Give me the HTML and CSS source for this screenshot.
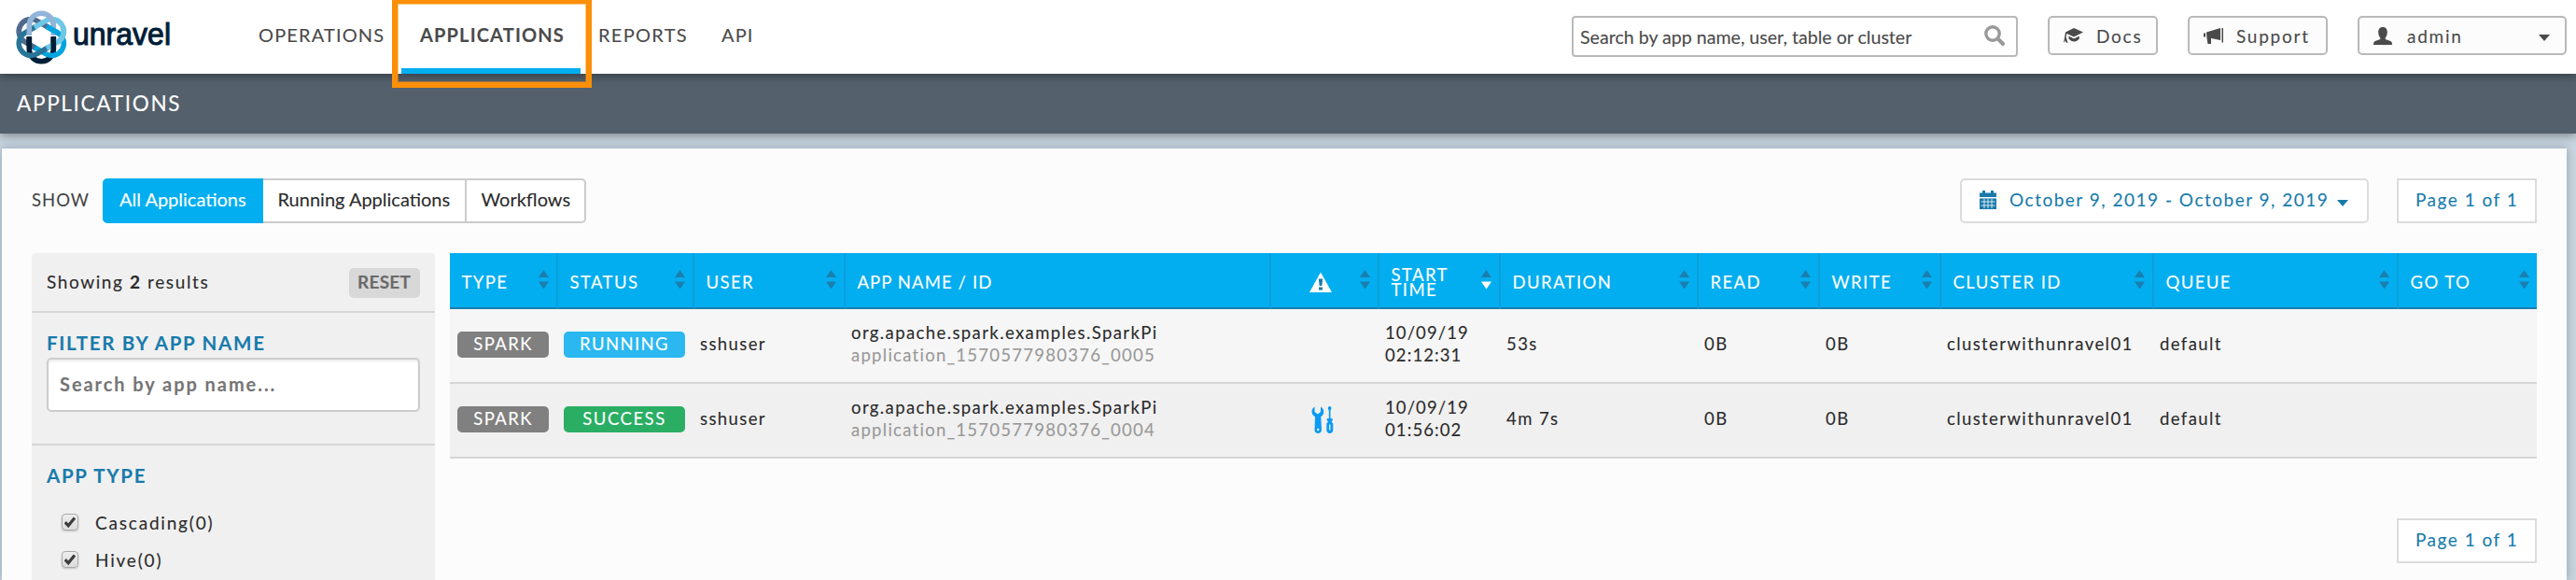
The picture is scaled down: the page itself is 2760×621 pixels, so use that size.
FILE: index.html
```
<!DOCTYPE html>
<html lang="en">
<head>
<meta charset="utf-8">
<title>Unravel - Applications</title>
<link rel="stylesheet" href="styles.css">
</head>
<body>
<svg class="defs" width="0" height="0">
  <symbol id="sort" viewBox="0 0 11 21"><path class="up" d="M5.500 0L11 8H0z"/><path class="down" d="M0 12.500h11l-5.500 8z"/></symbol>
  <symbol id="caret" viewBox="0 0 12 7"><path d="M0 0h12L6 7z"/></symbol>
</svg>
<header class="topbar">
  <a class="logo">
    <svg width="180" height="67" viewBox="0 0 180 67">
      <g transform="translate(36.3 40)" fill="none" stroke-width="5.6">
        <path stroke="#4f6a8c" transform="rotate(-60)" d="M-13 1V-12.8A13 13 0 0 1 13-12.8V1"/>
        <path stroke="#001e37" transform="rotate(180)" d="M-13 1V-12.8A13 13 0 0 1 13-12.8V1"/>
        <path stroke="#00a4de" transform="rotate(120)" d="M-13 1V-12.8A13 13 0 0 1 13-12.8V1"/>
        <path stroke="#297599" transform="rotate(-120)" d="M-13 1V-12.8A13 13 0 0 1 13-12.8V1"/>
        <path stroke="#6ec8e6" transform="rotate(60)" d="M-13 1V-12.8A13 13 0 0 1 13-12.8V1"/>
        <path stroke="#92b4d8" d="M-13 -2V-12.8A13 13 0 0 1 13-12.8V-2"/>
        <path stroke="#001e37" d="M-13 0V9M13 0V13"/>
        <path stroke="#6ec8e6" transform="rotate(60)" d="M13 -11.8A13 13 0 0 0 2 -25.4"/>
        <path stroke="#00a4de" transform="rotate(120)" d="M-13 -2V-14"/>
      </g>
      <text class="wordmark" x="70" y="48.4" textLength="105" lengthAdjust="spacingAndGlyphs">unravel</text>
    </svg>
  </a>
  <nav class="nav">
    <a class="nav-ops">OPERATIONS</a>
    <a class="nav-apps">APPLICATIONS<span class="callout"></span></a>
    <a class="nav-reports">REPORTS</a>
    <a class="nav-api">API</a>
  </nav>
  <div class="search"><span>Search by app name, user, table or cluster</span>
    <svg width="23" height="23" viewBox="0 0 23 23" fill="none" stroke="#999"><circle cx="9" cy="9" r="7.2" stroke-width="3.4"/><path d="M14.5 14.5l5.5 5.5" stroke-width="4" stroke-linecap="round"/></svg>
  </div>
  <a class="btn docs">
    <svg width="21" height="17" viewBox="0 0 21 17"><path d="M11 0l10 4.6-10 5L3.4 6 2.6 9.5l2 6.5-2-.6-.8-2L0 16l1.2-6.500L2 4.600z"/><path d="M5.500 8.600l5.500 2.700 5.800-2.700v3c-3 3.800-8 3.800-11.300 0z"/><path d="M5 7.600l6 3.200 6.500-3.200" fill="none" stroke="#fcfcfc" stroke-width="1"/></svg>
    <span>Docs</span></a>
  <a class="btn support">
    <svg width="21" height="17" viewBox="0 0 21 17"><path d="M3 4.500L18 0v13L8 11v6H4.500L3.500 11zM19.500 0H21v15.500h-1.500zM0 5.500h2v4H0z"/></svg>
    <span>Support</span></a>
  <a class="btn admin">
    <svg width="20" height="19" viewBox="0 0 20 19"><path d="M10 0c3.200 0 4.800 2.200 4.800 5.400 0 2.600-1 4.700-2.100 6v1.500l5.500 2c1.200.5 1.800 1.600 1.800 4.100H0c0-2.500.6-3.600 1.800-4.100l5.500-2v-1.500c-1.100-1.300-2.100-3.400-2.100-6C5.200 2.200 6.800 0 10 0z"/></svg>
    <span>admin</span>
    <svg class="caret" width="12" height="7"><use href="#caret"/></svg></a>
</header>
<div class="titlebar">APPLICATIONS</div>
<main class="card">
  <div class="toolbar">
    <span class="show">SHOW</span>
    <div class="tabs"><a class="tab active">All Applications</a><a class="tab running">Running Applications</a><a class="tab flows">Workflows</a></div>
    <a class="date">
      <svg width="18" height="20" viewBox="0 0 18 20"><path d="M0 2.500h3V0h3v2.500h6V0h3v2.500h3V7H0zM0 8.500h18V20H0z"/><path d="M1.500 12h15M1.500 16h15M5 9v10M9 9v10M13 9v10" stroke="#fff" stroke-width=".8"/></svg>
      <span>October 9, 2019 - October 9, 2019</span>
      <svg class="caret" width="12" height="7"><use href="#caret"/></svg>
    </a>
    <span class="page">Page 1 of 1</span>
  </div>
  <div class="content">
    <aside class="sidebar">
      <div class="results"><span>Showing <b>2</b> results</span><a class="reset">RESET</a></div>
      <section class="filter">
        <h3>FILTER BY APP NAME</h3>
        <div class="filter-input">Search by app name...</div>
      </section>
      <section class="types">
        <h3>APP TYPE</h3>
        <label><i class="check"><svg width="12" height="12" viewBox="0 0 12 12"><path d="M.8 6.200L4.200 9.800 11 1.500"/></svg></i>Cascading(0)</label>
        <label><i class="check"><svg width="12" height="12" viewBox="0 0 12 12"><path d="M.8 6.200L4.200 9.800 11 1.500"/></svg></i>Hive(0)</label>
      </section>
    </aside>
    <div class="listing">
      <div class="row head">
        <div>TYPE<svg class="sort"><use href="#sort"/></svg></div>
        <div>STATUS<svg class="sort"><use href="#sort"/></svg></div>
        <div>USER<svg class="sort"><use href="#sort"/></svg></div>
        <div class="tight">APP NAME / ID</div>
        <div><svg class="warn" width="24" height="22" viewBox="0 0 24 22"><path d="M12 0.500L24 22H0z" fill="#fff"/><path d="M9.800 7.500h4.400l-.9 7.500h-2.600zM10 16.500h4v3h-4z" fill="#1a7aab"/></svg><svg class="sort"><use href="#sort"/></svg></div>
        <div><span>START<br>TIME</span><svg class="sort desc"><use href="#sort"/></svg></div>
        <div>DURATION<svg class="sort"><use href="#sort"/></svg></div>
        <div>READ<svg class="sort"><use href="#sort"/></svg></div>
        <div>WRITE<svg class="sort"><use href="#sort"/></svg></div>
        <div>CLUSTER ID<svg class="sort"><use href="#sort"/></svg></div>
        <div>QUEUE<svg class="sort"><use href="#sort"/></svg></div>
        <div>GO TO<svg class="sort"><use href="#sort"/></svg></div>
      </div>
      <div class="row">
        <div><span class="badge spark">SPARK</span></div>
        <div><span class="badge run">RUNNING</span></div>
        <div>sshuser</div>
        <div><span>org.apache.spark.examples.SparkPi<br><span class="appid">application_1570577980376_0005</span></span></div>
        <div></div>
        <div class="time"><span>10/09/19<br>02:12:31</span></div>
        <div>53s</div><div>0B</div><div>0B</div><div>clusterwithunravel01</div><div>default</div><div></div>
      </div>
      <div class="row alt">
        <div><span class="badge spark">SPARK</span></div>
        <div><span class="badge ok">SUCCESS</span></div>
        <div>sshuser</div>
        <div><span>org.apache.spark.examples.SparkPi<br><span class="appid">application_1570577980376_0004</span></span></div>
        <div><svg class="tools" width="24" height="29" viewBox="0 0 24 29"><path d="M3.500.5v5.500l3.300 2.500L10 6V.5c2 1 3.300 3 3.300 5.200 0 2.500-1.300 4.300-3 5.300L11 25.500c0 4.500-7.500 4.500-7.500 0L4 11C2 10 .5 8.200.5 5.700.5 3.500 1.600 1.500 3.500.5z"/><circle cx="7.200" cy="25" r="1.200" fill="#f0f0f0"/><path d="M19.600 0c1.500 0 2.200 1.600 1.600 3l-.7 1.500V13h2l.3 2-1.200 1.500 1.700 2v7c0 4.500-7 4.500-7 0v-7l1.700-2L16.600 15l.3-2h1.900V4.500L18 3c-.5-1.400.2-3 1.600-3z"/><path d="M19.800 19.500v6" stroke="#f0f0f0" stroke-width="1.300"/></svg></div>
        <div class="time"><span>10/09/19<br>01:56:02</span></div>
        <div>4m 7s</div><div>0B</div><div>0B</div><div>clusterwithunravel01</div><div>default</div><div></div>
      </div>
      <span class="page bottom">Page 1 of 1</span>
    </div>
  </div>
</main>
</body>
</html>
```
FILE: styles.css
```
* { box-sizing: border-box; }
body {
  margin: 0;
  height: 621px;
  overflow: hidden;
  background: #c9d5df;
  font-family: Lato, "Open Sans", sans-serif;
  font-size: 18.5px;
  color: #2b2b2b;
  -webkit-text-stroke: .1px currentColor;
}
svg { display: block; flex: none; }
.defs { position: absolute; }
.caret { overflow: visible; }

.topbar {
  position: relative;
  z-index: 2;
  display: flex;
  height: 79px;
  background: #fff;
  color: #4a4a4a;
  box-shadow: 0 2px 10px rgba(0, 0, 0, .4);
}
.logo { width: 180px; margin-left: 8px; }
.logo svg { overflow: visible; }
.wordmark { font: 400 34px "Liberation Sans", Arial, sans-serif; fill: #001e37; stroke: #001e37; stroke-width: 1.1px; }

.nav { display: flex; width: 1496px; font-size: 20px; line-height: 75px; letter-spacing: 1.15px; white-space: nowrap; }
.nav-ops { width: 152px; margin-left: 89px; }
.nav-apps { position: relative; width: 192px; height: 79px; margin-left: 1px; padding-left: 20px; font-weight: 700; letter-spacing: 1.15px; border-bottom: 6px solid #03aef0; }
.nav-reports { width: 132px; margin-left: 19px; letter-spacing: 1.3px; }
.callout { position: absolute; left: -10px; top: -2px; width: 214px; height: 96px; border: 6px solid #fb8f08; box-shadow: inset 0 0 0 1px rgba(251, 143, 8, .5); }

.search {
  display: flex;
  align-items: center;
  width: 478px;
  height: 44px;
  margin-top: 17px;
  padding: 0 11px 0 7px;
  border: 2px solid #b9b9b9;
  border-radius: 4px;
  font-size: 19.6px;
  white-space: nowrap;
}
.search span { width: 434px; }
.search svg { margin-top: -2px; }
.btn {
  display: flex;
  align-items: center;
  height: 42px;
  margin-top: 17px;
  padding-left: 15px;
  border: 2px solid #b9b9b9;
  border-radius: 5px;
  background: #fcfcfc;
  font-size: 19px;
  letter-spacing: 1.75px;
  fill: #4a4a4a;
}
.btn span { margin-left: 14px; }
.docs { width: 118px; margin-left: 32px; }
.support { width: 150px; margin-left: 32px; }
.admin { width: 224px; margin-left: 32px; }
.admin span { width: 141px; margin-left: 16px; }
.admin .caret { margin-top: 4px; }

.titlebar {
  position: relative;
  z-index: 1;
  height: 64px;
  padding-left: 18px;
  background: #54616c;
  box-shadow: 0 2px 10px rgba(0, 0, 0, .4);
  color: #fff;
  font-size: 22.5px;
  line-height: 63px;
  letter-spacing: 1.7px;
}

.card {
  width: 2748px;
  height: 462px;
  margin: 16px 0 0 2px;
  padding: 32px 32px 0;
  background: #fcfcfc;
  box-shadow: 0 0 10px rgba(60, 80, 110, .4);
}
.toolbar { display: flex; height: 48px; white-space: nowrap; }
.show { width: 76px; line-height: 46px; letter-spacing: 1px; color: #444; }
.tabs { display: flex; width: 518px; font-size: 20px; line-height: 41px; }
.tab { border: 2px solid #ccc; border-left-width: 0; background: #fff; }
.active { width: 172px; padding-left: 18px; border-color: #03aef0; border-radius: 5px 0 0 5px; background: #03aef0; color: #fff; }
.running { width: 218px; padding-left: 15.5px; }
.flows { width: 128px; padding-left: 15.5px; border-radius: 0 5px 5px 0; }
.date {
  display: flex;
  align-items: center;
  width: 438px;
  margin-left: 1472px;
  padding: 0 0 3px 19px;
  border: 2px solid #dcdcdc;
  border-radius: 5px;
  background: #fff;
  color: #187bab;
  fill: #187bab;
  font-size: 19px;
  letter-spacing: 1.5px;
}
.date span { width: 351px; margin-left: 14px; }
.date .caret { margin-top: 7px; }
.page {
  width: 150px;
  height: 48px;
  margin-left: 30px;
  padding-left: 18px;
  border: 2px solid #dcdcdc;
  background: #fff;
  color: #187bab;
  font-size: 19px;
  line-height: 41px;
  letter-spacing: 1.5px;
}

.content { display: flex; gap: 16px; margin-top: 32px; }
.sidebar { width: 432px; height: 350px; border-radius: 4px 4px 0 0; background: #f0f0f0; }
.results { display: flex; justify-content: space-between; height: 64px; padding: 0 16px; border-bottom: 2px solid #d6d6d6; font-size: 19px; line-height: 61px; letter-spacing: 1.6px; }
.reset { width: 76px; height: 32px; margin-top: 16px; padding-left: 9px; border-radius: 5px; background: #d8d8d8; color: #6a6a6a; font-size: 19px; font-weight: 700; line-height: 29px; letter-spacing: .25px; }
h3 { margin: 0; color: #187bab; font-size: 20.5px; font-weight: 700; line-height: 24px; letter-spacing: 1.72px; }
.filter { height: 142px; padding: 20px 16px 0; border-bottom: 2px solid #d6d6d6; }
.filter-input { height: 58px; margin-top: 4px; padding-left: 12px; border: 2px solid #ccc; border-radius: 5px; background: #fff; box-shadow: inset 0 2px 3px rgba(0, 0, 0, .08); color: #757575; font-size: 20px; font-weight: 700; line-height: 53px; letter-spacing: 1.94px; }
.types { padding: 20px 16px 0; }
.types h3 { margin-bottom: 18px; }
.types label { display: flex; align-items: center; height: 40px; padding-left: 16px; font-size: 19px; letter-spacing: 1.8px; }
.check { display: flex; align-items: center; justify-content: center; width: 18px; height: 18px; margin: -1px 18px 0 0; border: 1.5px solid #aaa; border-radius: 4px; background: linear-gradient(#eee, #dcdcdc); box-shadow: 0 1px 2px rgba(0, 0, 0, .2); }
.check svg { fill: none; stroke: #3c3c3c; stroke-width: 3.2; }

.listing { width: 2236px; }
.row { display: grid; grid-template-columns: 116px 146px 162px 456px 116px 130px 212px 130px 130px 228px 262px 148px; height: 80px; border-bottom: 2px solid #d6d6d6; background: #f6f6f6; line-height: 24px; letter-spacing: 1.4px; white-space: nowrap; }
.row > div { display: flex; align-items: center; padding: 0 0 4px 6px; }
.alt { background: #f0f0f0; }
.row.head { height: 60px; border: 0; background: #03aef0; color: #fff; line-height: 16px; }
.head > div { justify-content: space-between; padding: 4px 8px 0 12.5px; border-right: 2px solid #0b9fd9; border-bottom: 2px solid #1a7eae; }
.head > div:last-child { border-right: 0; }
.row .tight { letter-spacing: 1.1px; }
.sort { width: 11px; height: 21px; margin-top: -5px; fill: #1a7eae; }
.desc { --down: #fff; }
.down { fill: var(--down, #1a7eae); }
.warn { margin-left: 28.5px; }
.tools { margin: 3px 0 0 37px; fill: #0a9bf2; }
.appid { color: #999; letter-spacing: 1.27px; }
.row .time { letter-spacing: 1.1px; }
.badge { height: 28px; margin-top: 2px; border-radius: 5px; color: #fff; line-height: 26px; text-align: center; }
.spark { width: 98px; margin-left: 2px; background: #808080; }
.run { width: 130px; background: #2bb8f0; }
.ok { width: 130px; background: #2aae64; letter-spacing: 1.5px; }
.bottom { display: block; margin: 64px 0 0 auto; }
```
